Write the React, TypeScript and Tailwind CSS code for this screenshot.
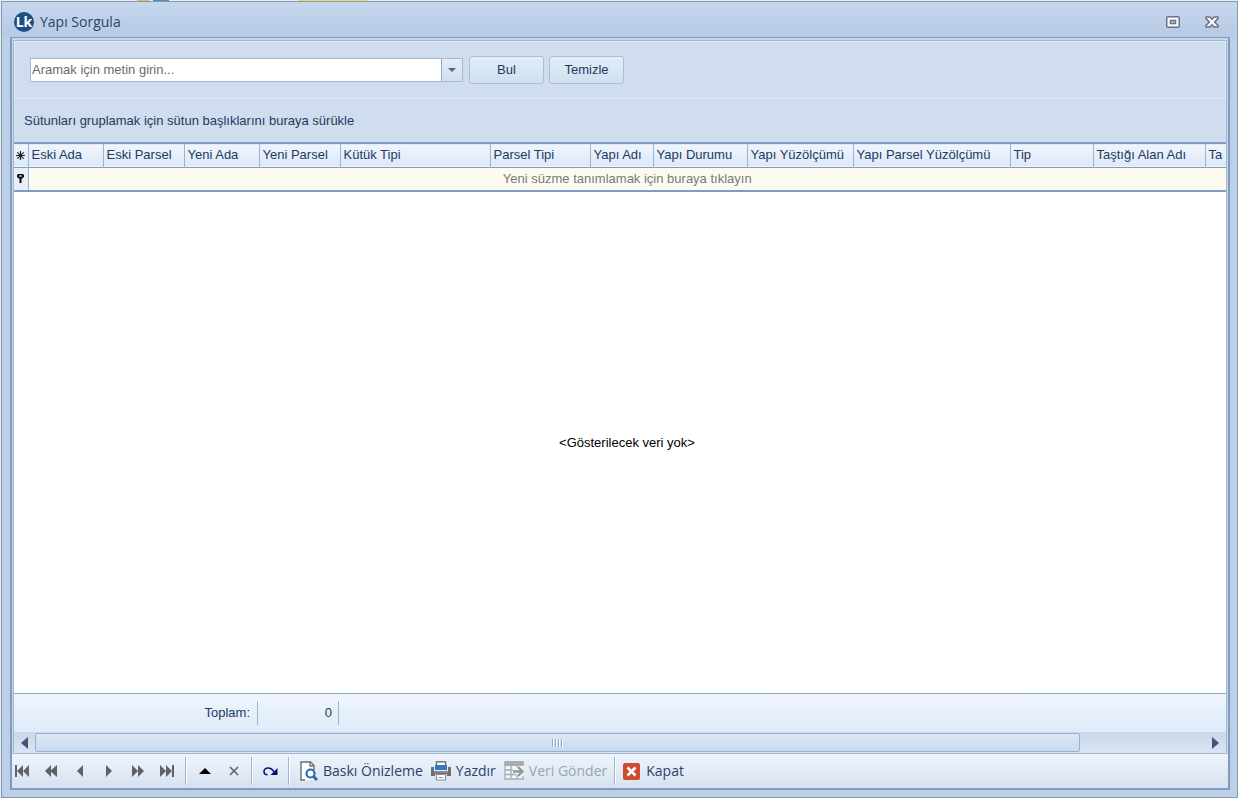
import type { ReactNode } from 'react';

interface Column {
  title: string;
  width?: number;
}

// The last column takes whatever room is left in the grid
const COLUMNS: Column[] = [
  { title: 'Eski Ada', width: 75 },
  { title: 'Eski Parsel', width: 81 },
  { title: 'Yeni Ada', width: 75 },
  { title: 'Yeni Parsel', width: 81 },
  { title: 'Kütük Tipi', width: 150 },
  { title: 'Parsel Tipi', width: 100 },
  { title: 'Yapı Adı', width: 63 },
  { title: 'Yapı Durumu', width: 94 },
  { title: 'Yapı Yüzölçümü', width: 106 },
  { title: 'Yapı Parsel Yüzölçümü', width: 157 },
  { title: 'Tip', width: 83 },
  { title: 'Taştığı Alan Adı', width: 112 },
  { title: 'Ta' },
];

const NAV_ITEMS = [
  { label: 'İlk kayıt', path: 'M0 0h2v12H0zM8 0v12L2 6zM14 0v12L8 6z' },
  { label: 'Önceki sayfa', path: 'M7 0v12L1 6zM13 0v12L6 6z' },
  { label: 'Önceki kayıt', path: 'M10 0v12L4 6z' },
  { label: 'Sonraki kayıt', path: 'M4 0v12l6-6z' },
  { label: 'Sonraki sayfa', path: 'M1 0v12l6-6zM7 0v12l6-6z' },
  { label: 'Son kayıt', path: 'M0 0v12l6-6zM6 0v12l6-6zM12 0h2v12h-2z' },
];

const Logo = () => (
  <div className="flex size-5 items-center justify-center rounded-full bg-[#1f4e86] font-['Open_Sans',sans-serif] text-[14px] leading-none font-bold text-white">
    Lk
  </div>
);

const MaximizeIcon = () => (
  <svg width="14" height="12" viewBox="0 0 14 12">
    <rect x="0.75" y="0.75" width="12.5" height="10.5" rx="1" fill="#f4f7fb" stroke="#6b7385" strokeWidth="1.5" />
    <rect x="4.5" y="4.5" width="5" height="3" fill="#c3cbd8" stroke="#6b7385" strokeWidth="1.5" />
  </svg>
);

const CloseIcon = () => (
  <svg width="14" height="12" viewBox="0 0 14 12">
    <path
      d="M1 1h4l2 2.2L9 1h4v1.6L9.6 6 13 9.4V11H9L7 8.8 5 11H1V9.4L4.4 6 1 2.6z"
      fill="#f4f7fb"
      stroke="#6b7385"
      strokeWidth="1.5"
      strokeLinejoin="round"
    />
  </svg>
);

const PreviewIcon = () => (
  <svg width="18" height="20" viewBox="0 0 18 20">
    <path d="M10.5 1H1v18h13V5z" fill="#fff" />
    <path d="M5 19H1V1h9.5L14 4.5V9" fill="none" stroke="#6c6f73" strokeWidth="1.4" />
    <path d="M10 1v4h4" fill="none" stroke="#6c6f73" strokeWidth="1.3" />
    <circle cx="10.5" cy="12.5" r="4" fill="#fff" stroke="#2a6cb4" strokeWidth="2.2" />
    <path d="M13.5 15.5L17 19" stroke="#2a6cb4" strokeWidth="3" />
  </svg>
);

const PrinterIcon = () => (
  <svg width="20" height="20" viewBox="0 0 20 20">
    <path d="M0 6h3v4h14V6h3v9h-4v-2H4v2H0z" fill="#6c7075" />
    <rect x="5.5" y="0.8" width="9" height="4" fill="#fff" stroke="#6c7075" strokeWidth="1.4" />
    <rect x="4" y="4" width="12" height="5" fill="#3579bd" />
    <rect x="3" y="10" width="14" height="2" fill="#85898e" />
    <path d="M5.5 13.5h9V19h-9z" fill="#fff" stroke="#8b8f94" strokeWidth="1.2" />
    <path d="M8 16.5h4" stroke="#8b8f94" />
  </svg>
);

const ExportIcon = () => (
  <svg width="20" height="20" viewBox="0 0 20 20">
    <path d="M1 1h18v17H1z" fill="#f1f4f8" />
    <path d="M1 1h18v3H1z" fill="#b5b8bc" stroke="#9a9da1" strokeWidth="1.3" />
    <path
      d="M1 4v14h18v-3M7 1v17M13 14v4M13 1v5M1 9h8M1 13.5h11"
      fill="none"
      stroke="#a9acb0"
      strokeWidth="1.3"
    />
    <path d="M9 10.5h9M14 6l4.5 4.5L14 15" fill="none" stroke="#93979b" strokeWidth="2.4" />
  </svg>
);

const ExitIcon = () => (
  <svg width="17" height="17" viewBox="0 0 17 17">
    <rect width="17" height="17" rx="2" fill="#d04a30" />
    <path d="M4.5 4.5l8 8M12.5 4.5l-8 8" stroke="#fff" strokeWidth="2.6" />
  </svg>
);

const RefreshIcon = () => (
  <svg width="15" height="9" viewBox="0 0 15 9">
    <path d="M4.5 7.8C2 7.8 1 6.5 1 4.5S2.5 1 5 1s4.5 1 6 4" fill="none" stroke="#10107c" strokeWidth="1.6" />
    <path d="M14.5 1v7h-7z" fill="#10107c" />
  </svg>
);

const Separator = () => <div className="h-7 w-[2px] border-l border-[#a3b6d0] bg-white" />;

interface IconButtonProps {
  label: string;
  children: ReactNode;
}

const IconButton = ({ label, children }: IconButtonProps) => (
  <button type="button" aria-label={label} className="flex h-6 w-[29px] shrink-0 items-center justify-center">
    {children}
  </button>
);

const TitleBar = () => (
  <header className="flex h-[35px] shrink-0 items-center bg-linear-to-b from-[#c5d7ed] to-[#b8cae4] pt-1 pr-[18px] pl-3">
    <Logo />
    <h1 className="ml-[6px] font-['Open_Sans',sans-serif] text-[14px] text-[#2c4268]">Yapı Sorgula</h1>
    <div className="ml-auto flex gap-[25px]">
      <button type="button" aria-label="Ekranı kapla">
        <MaximizeIcon />
      </button>
      <button type="button" aria-label="Pencereyi kapat">
        <CloseIcon />
      </button>
    </div>
  </header>
);

const SearchPanel = () => (
  <form
    className="flex h-[58px] shrink-0 items-center border border-[#dfe9f6] pl-[15px]"
    onSubmit={(e) => e.preventDefault()}
  >
    <div className="flex h-6 w-[433px] border border-[#a6b9d4] bg-white">
      <input
        type="text"
        aria-label="Arama metni"
        placeholder="Aramak için metin girin..."
        className="min-w-0 flex-1 px-px outline-none placeholder:text-[#6a6a6a]"
      />
      <button
        type="button"
        aria-label="Geçmiş aramalar"
        className="flex w-[21px] items-center justify-center border-l border-[#8fa9cc] bg-linear-to-b from-[#e2edf8] to-[#d0dfef]"
      >
        <svg width="8" height="4" viewBox="0 0 8 4">
          <path d="M0 0h8L4 4z" fill="#5a5f85" />
        </svg>
      </button>
    </div>
    <button
      type="submit"
      className="ml-[6px] h-7 w-[75px] rounded-[3px] border border-[#abbdd7] bg-linear-to-b from-[#e1edf9] to-[#d0e0f0]"
    >
      Bul
    </button>
    <button
      type="reset"
      className="ml-[5px] h-7 w-[75px] rounded-[3px] border border-[#abbdd7] bg-linear-to-b from-[#e1edf9] to-[#d0e0f0]"
    >
      Temizle
    </button>
  </form>
);

const DataGrid = () => (
  <div className="flex min-h-0 flex-1 flex-col overflow-hidden bg-white">
    <table className="w-full table-fixed border-collapse">
      <colgroup>
        <col className="w-[14px]" />
        {COLUMNS.map((column) => (
          <col key={column.title} style={{ width: column.width }} />
        ))}
      </colgroup>
      <thead>
        <tr className="h-6 border-t-2 border-b border-[#7f9cc3] bg-linear-to-b from-[#f0f5fd] to-[#dde9f8]">
          <th className="border-r border-[#9db3d2] p-0">
            <svg className="mx-auto" width="9" height="9" viewBox="0 0 9 9" aria-hidden="true">
              <path d="M4.5 0v9M0 4.5h9M1.3 1.3l6.4 6.4M7.7 1.3L1.3 7.7" stroke="#222" strokeWidth="1.2" />
            </svg>
          </th>
          {COLUMNS.map((column) => (
            <th
              key={column.title}
              className="overflow-hidden border-r border-[#9db3d2] p-0 pl-[3px] text-left font-normal whitespace-nowrap last:border-r-0"
            >
              {column.title}
            </th>
          ))}
        </tr>
      </thead>
      <tbody>
        <tr className="h-6 border-b-2 border-[#7f9cc3] bg-[#fbfbf2]">
          <td className="border-r border-[#9db3d2] bg-[#e6effa] p-0">
            <svg className="mx-auto" width="7" height="9" viewBox="0 0 7 9" aria-hidden="true">
              <path d="M1 0h5l1 1v2L4.5 5v4h-2V5L0 3V1z" fill="#111" />
              <path d="M2 2h3" stroke="#fff" />
            </svg>
          </td>
          <td colSpan={COLUMNS.length} className="p-0 text-center text-[#7a7a76]">
            <button type="button" className="align-top">
              Yeni süzme tanımlamak için buraya tıklayın
            </button>
          </td>
        </tr>
      </tbody>
    </table>
    <div className="flex flex-1 items-center justify-center pl-[14px] text-black">&lt;Gösterilecek veri yok&gt;</div>
  </div>
);

const SummaryFooter = () => (
  <div className="flex h-[39px] shrink-0 items-center border-t border-[#8fa9cc] bg-linear-to-b from-[#eff5fd] to-[#deebf8]">
    <div className="flex h-6 w-[244px] items-center justify-end border-r border-[#9db3d2] pr-[7px]">Toplam:</div>
    <div className="flex h-6 w-[81px] items-center justify-end border-r border-[#9db3d2] pr-[6px]">0</div>
  </div>
);

const HorizontalScroll = () => (
  <div className="flex h-[21px] shrink-0 items-center bg-linear-to-b from-[#c8d8e9] to-[#d9e5f2]">
    <button type="button" aria-label="Sola kaydır" className="flex h-full w-[21px] items-center justify-center">
      <svg width="7" height="12" viewBox="0 0 7 12">
        <path d="M7 0v12L0 6z" fill="#46527a" />
      </svg>
    </button>
    <div className="flex h-[19px] flex-25 items-center justify-center gap-px rounded-[2px] border border-[#96afd2] bg-linear-to-b from-[#dfe8f4] to-[#c8daee]">
      {[0, 1, 2, 3].map((grip) => (
        <span key={grip} className="h-2 w-[2px] border-r border-white bg-[#8ea6c8]" />
      ))}
    </div>
    <div className="flex-3" />
    <button type="button" aria-label="Sağa kaydır" className="flex h-full w-[21px] items-center justify-center">
      <svg width="7" height="12" viewBox="0 0 7 12">
        <path d="M0 0v12l7-6z" fill="#46527a" />
      </svg>
    </button>
  </div>
);

const Toolbar = () => (
  <nav className="flex h-[34px] shrink-0 items-center bg-linear-to-b from-[#eff4fc] to-[#d6e2f0] font-['Open_Sans',sans-serif] text-[14px] text-[#2c4268]">
    <div className="-ml-[5px] flex">
      {NAV_ITEMS.map((item) => (
        <IconButton key={item.label} label={item.label}>
          <svg width="14" height="12" viewBox="0 0 14 12">
            <path d={item.path} fill="#5f6368" />
          </svg>
        </IconButton>
      ))}
    </div>
    <div className="ml-1">
      <Separator />
    </div>
    <div className="mx-[3px] flex">
      <IconButton label="Düzenle">
        <svg width="12" height="6" viewBox="0 0 12 6">
          <path d="M6 0l6 6H0z" fill="#000" />
        </svg>
      </IconButton>
      <IconButton label="İptal">
        <svg width="10" height="10" viewBox="0 0 10 10">
          <path d="M1 1l8 8M9 1L1 9" stroke="#5f6368" strokeWidth="1.6" />
        </svg>
      </IconButton>
    </div>
    <Separator />
    <div className="mx-[3px]">
      <IconButton label="Yenile">
        <RefreshIcon />
      </IconButton>
    </div>
    <Separator />
    <div className="flex gap-2 pl-[10px]">
      <button type="button" className="flex items-center gap-[5px]">
        <PreviewIcon />
        Baskı Önizleme
      </button>
      <button type="button" className="flex items-center gap-[5px]">
        <PrinterIcon />
        Yazdır
      </button>
      <button type="button" disabled className="flex items-center gap-[5px] text-[#9ba4b2]">
        <ExportIcon />
        Veri Gönder
      </button>
    </div>
    <div className="mx-[7px]">
      <Separator />
    </div>
    <button type="button" className="flex items-center gap-[6px]">
      <ExitIcon />
      Kapat
    </button>
  </nav>
);

export default function App() {
  return (
    <div className="flex h-screen flex-col overflow-hidden bg-[#e8edf2] pl-px text-[13px] leading-[18px] text-[#233a5e]">
      {/* Edge of the ribbon behind the window */}
      <div className="flex h-px shrink-0">
        <span className="ml-[136px] w-3 bg-[#eab765]" />
        <span className="ml-1 w-4 bg-[#4a8ac0]" />
        <span className="ml-[129px] w-[70px] bg-[#f3d577]" />
      </div>
      <div className="flex min-h-0 flex-1 flex-col border border-[#8799af] bg-[#bccee8] font-['Liberation_Sans',sans-serif]">
        <TitleBar />
        <main className="mr-[7px] mb-[7px] ml-2 flex min-h-0 flex-1 flex-col border-2 border-t border-[#7f9bbd] bg-[#c6d6eb]">
          <div className="mx-px mt-[2px] flex min-h-0 flex-1 flex-col border border-[#a5b8d3] bg-[#d0ddee]">
            <SearchPanel />
            <p className="flex h-[43px] shrink-0 items-center pl-[10px]">
              Sütunları gruplamak için sütun başlıklarını buraya sürükle
            </p>
            <DataGrid />
            <SummaryFooter />
            <HorizontalScroll />
          </div>
          <Toolbar />
        </main>
      </div>
    </div>
  );
}
